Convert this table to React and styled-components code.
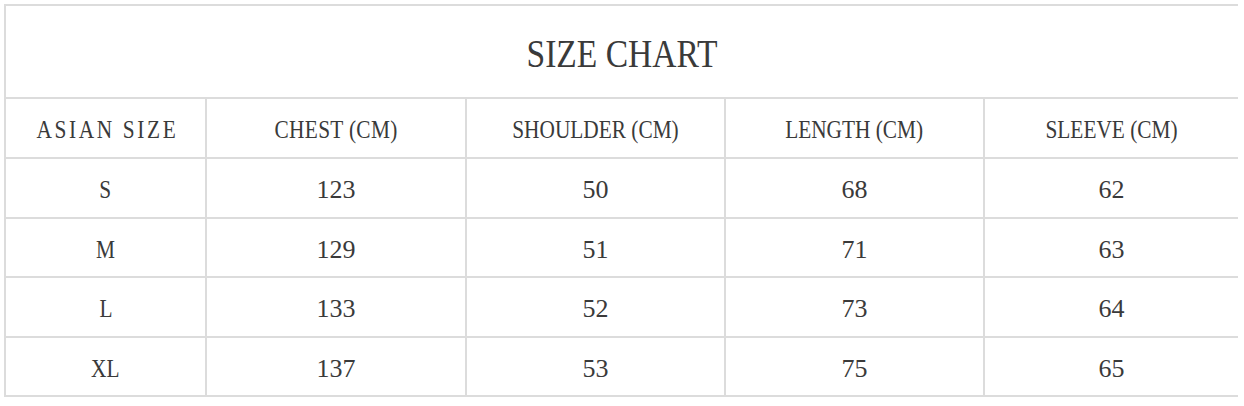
import React from "react";
import styled, { createGlobalStyle } from "styled-components";

const Global = createGlobalStyle`
  html, body { margin: 0; padding: 0; background: #ffffff; }
  body { font-family: "Liberation Serif", "Times New Roman", serif; color: #3a3a3a; }
`;

const Chart = styled.div`
  margin: 4px 0 0 4px;
  width: 1234px;
  box-sizing: border-box;
  padding: 2px 0 2px 2px;
  background: #dcdcdc;
  display: grid;
  grid-template-columns: 199px 258px 257px 257px 253px;
  grid-template-rows: 91px 58px 58px 57px 58px 57px;
  gap: 2px;
`;

const Cell = styled.div`
  background: #ffffff;
  display: flex;
  align-items: center;
  justify-content: center;
  grid-column: ${(p) => (p.$span ? "1 / -1" : "auto")};
`;

const Text = styled.span`
  display: inline-block;
  font-size: ${(p) => p.$size}px;
  line-height: 1;
  white-space: pre;
  letter-spacing: ${(p) => p.$ls || 0}px;
  margin-right: ${(p) => -(p.$ls || 0)}px;
  transform: scaleX(${(p) => p.$sx});
  padding-top: ${(p) => p.$dy || 0}px;
`;

const headers = [
  { t: "ASIAN SIZE", ls: 3.2 },
  { t: "CHEST (CM)", ls: 0.4 },
  { t: "SHOULDER (CM)", ls: 0 },
  { t: "LENGTH (CM)", ls: 0 },
  { t: "SLEEVE (CM)", ls: 0 },
];
const rows = [
  ["S", "123", "50", "68", "62"],
  ["M", "129", "51", "71", "63"],
  ["L", "133", "52", "73", "64"],
  ["XL", "137", "53", "75", "65"],
];

export default function App() {
  return (
    <>
      <Global />
      <Chart>
        <Cell $span>
          <Text $size={39} $sx={0.86} $dy={4}>SIZE CHART</Text>
        </Cell>
        {headers.map((h) => (
          <Cell key={h.t}>
            <Text $size={26} $sx={0.82} $ls={h.ls} $dy={4}>{h.t}</Text>
          </Cell>
        ))}
        {rows.map((r) =>
          r.map((v, i) => (
            <Cell key={r[0] + i}>
              <Text $size={26} $sx={i === 0 ? 0.82 : 1} $dy={4}>{v}</Text>
            </Cell>
          ))
        )}
      </Chart>
    </>
  );
}
